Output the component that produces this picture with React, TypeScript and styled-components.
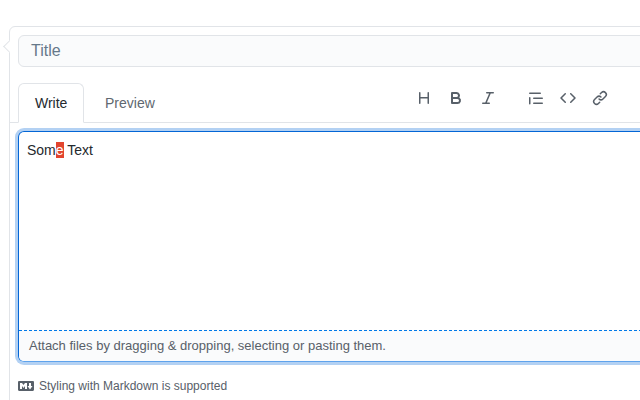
import React from "react";
import styled, { createGlobalStyle } from "styled-components";

const Global = createGlobalStyle`
  html, body { margin: 0; padding: 0; background: #fff; overflow: hidden; }
  body { width: 640px; height: 400px; font-family: "Liberation Sans", Arial, sans-serif; color: #24292e; }
`;

const Page = styled.div`
  width: 640px;
  height: 400px;
  overflow: hidden;
  padding: 26px 0 0 9px;
  box-sizing: border-box;
`;

const Card = styled.div`
  position: relative;
  width: 760px;
  height: 420px;
  box-sizing: border-box;
  border: 1px solid #e1e4e8;
  border-radius: 6px 0 0 0;
  padding-top: 8px;
  &::before {
    content: "";
    position: absolute;
    left: -5px;
    top: 15px;
    width: 8px;
    height: 8px;
    background: #fff;
    border-left: 1px solid #e1e4e8;
    border-bottom: 1px solid #e1e4e8;
    transform: rotate(45deg);
  }
`;

const TitleRow = styled.div`
  padding-left: 8px;
`;

const TitleInput = styled.div`
  height: 32px;
  box-sizing: border-box;
  border: 1px solid #e1e4e8;
  border-radius: 6px;
  background: #fafbfc;
  padding: 0 12px;
  font-size: 16px;
  line-height: 30px;
  color: #66788a;
`;

const TabBar = styled.div`
  display: flex;
  align-items: flex-end;
  height: 40px;
  margin-top: 15px;
  padding-left: 8px;
  border-bottom: 1px solid #e1e4e8;
`;

const WriteTab = styled.div`
  box-sizing: border-box;
  width: 66px;
  height: 40px;
  margin: 0 4px -1px 0;
  padding: 0 16px;
  font-size: 14px;
  line-height: 38px;
  color: #24292e;
  background: #fff;
  border: 1px solid #e1e4e8;
  border-bottom-color: #fff;
  border-radius: 6px 6px 0 0;
`;

const PreviewTab = styled.div`
  box-sizing: border-box;
  height: 39px;
  padding: 0 17px;
  font-size: 14px;
  line-height: 40px;
  color: #606870;
`;

const Toolbar = styled.div`
  display: flex;
  align-items: center;
  height: 30px;
  margin-left: 244px;
  margin-bottom: 9px;
`;

const ToolGroup = styled.div`
  display: flex;
  gap: 16px;
  & + & { margin-left: 32px; }
`;

const ToolIcon = styled.svg`
  width: 16px;
  height: 16px;
  fill: #586069;
  display: block;
`;

const Editor = styled.div`
  margin: 8px 0 0 8px;
  height: 231px;
  box-sizing: border-box;
  border: 1px solid #0366d6;
  border-bottom-color: #5fa3ec;
  border-radius: 6px;
  box-shadow: 0 0 0 3px rgba(3, 102, 214, 0.3);
  display: flex;
  flex-direction: column;
  overflow: hidden;
`;

const EditArea = styled.div`
  flex: 1;
  padding: 10px 8px;
  font-size: 14px;
  line-height: 17px;
  color: #24292e;
`;

const Marked = styled.span`
  background: #e2452f;
  color: #fff;
`;

const AttachBar = styled.div`
  height: 31px;
  box-sizing: border-box;
  border-top: 1px dashed #0078e7;
  background: #fafbfc;
  padding: 0 10px;
  font-size: 13px;
  line-height: 30px;
  color: #586069;
`;

const Hint = styled.div`
  display: flex;
  align-items: center;
  gap: 5px;
  margin: 15px 0 0 8px;
  font-size: 12px;
  line-height: 18px;
  color: #586069;
`;

const paths = {
  heading: "M3.75 2a.75.75 0 0 1 .75.75V7h7V2.75a.75.75 0 0 1 1.5 0v10.5a.75.75 0 0 1-1.5 0V8.5h-7v4.75a.75.75 0 0 1-1.5 0V2.75A.75.75 0 0 1 3.75 2Z",
  bold: "M4 2h4.5a3.501 3.501 0 0 1 2.852 5.53A3.499 3.499 0 0 1 9.5 14H4a1 1 0 0 1-1-1V3a1 1 0 0 1 1-1Zm1 7v3h4.5a1.5 1.5 0 0 0 0-3Zm3.5-2a1.5 1.5 0 0 0 0-3H5v3Z",
  italic: "M6 2.75A.75.75 0 0 1 6.75 2h6.5a.75.75 0 0 1 0 1.5h-2.505l-3.858 9H9.25a.75.75 0 0 1 0 1.5h-6.5a.75.75 0 0 1 0-1.5h2.505l3.858-9H6.75A.75.75 0 0 1 6 2.75Z",
  quote: "M1.75 2.5h10.5a.75.75 0 0 1 0 1.5H1.75a.75.75 0 0 1 0-1.5Zm4 5h8.5a.75.75 0 0 1 0 1.5h-8.5a.75.75 0 0 1 0-1.5Zm0 5h8.5a.75.75 0 0 1 0 1.5h-8.5a.75.75 0 0 1 0-1.5ZM2.5 7.75v6a.75.75 0 0 1-1.5 0v-6a.75.75 0 0 1 1.5 0Z",
  code: "m11.28 3.22 4.25 4.25a.75.75 0 0 1 0 1.06l-4.25 4.25a.749.749 0 0 1-1.275-.326.749.749 0 0 1 .215-.734L13.94 8l-3.72-3.72a.749.749 0 0 1 .326-1.275.749.749 0 0 1 .734.215Zm-6.56 0a.751.751 0 0 1 1.042.018.751.751 0 0 1 .018 1.042L2.06 8l3.72 3.72a.749.749 0 0 1-.326 1.275.749.749 0 0 1-.734-.215L.47 8.53a.75.75 0 0 1 0-1.06Z",
  link: "m7.775 3.275 1.25-1.25a3.5 3.5 0 1 1 4.95 4.95l-2.5 2.5a3.5 3.5 0 0 1-4.95 0 .751.751 0 0 1 .018-1.042.751.751 0 0 1 1.042-.018 1.998 1.998 0 0 0 2.83 0l2.5-2.5a2.002 2.002 0 0 0-2.83-2.83l-1.25 1.25a.751.751 0 0 1-1.042-.018.751.751 0 0 1-.018-1.042Zm-4.69 9.64a1.998 1.998 0 0 0 2.83 0l1.25-1.25a.751.751 0 0 1 1.042.018.751.751 0 0 1 .018 1.042l-1.25 1.25a3.5 3.5 0 1 1-4.95-4.95l2.5-2.5a3.5 3.5 0 0 1 4.95 0 .751.751 0 0 1-.018 1.042.751.751 0 0 1-1.042.018 1.998 1.998 0 0 0-2.83 0l-2.5 2.5a1.998 1.998 0 0 0 0 2.83Z",
  markdown: "M14.85 3c.63 0 1.15.52 1.14 1.15v7.7c0 .63-.51 1.15-1.15 1.15H1.15C.52 13 0 12.48 0 11.84V4.15C0 3.52.52 3 1.15 3ZM9 11V5H7L5.5 7 4 5H2v6h2V8l1.5 1.92L7 8v3Zm2.99.5L14.5 8H13V5h-2v3H9.5Z",
};

const Icon = ({ name }: { name: keyof typeof paths }) => (
  <ToolIcon viewBox="0 0 16 16" aria-hidden="true">
    <path d={paths[name]} />
  </ToolIcon>
);

export default function App() {
  return (
    <Page>
      <Global />
      <Card>
        <TitleRow>
          <TitleInput>Title</TitleInput>
        </TitleRow>
        <TabBar>
          <WriteTab>Write</WriteTab>
          <PreviewTab>Preview</PreviewTab>
          <Toolbar>
            <ToolGroup>
              <Icon name="heading" />
              <Icon name="bold" />
              <Icon name="italic" />
            </ToolGroup>
            <ToolGroup>
              <Icon name="quote" />
              <Icon name="code" />
              <Icon name="link" />
            </ToolGroup>
          </Toolbar>
        </TabBar>
        <Editor>
          <EditArea>
            Som<Marked>e</Marked> Text
          </EditArea>
          <AttachBar>Attach files by dragging &amp; dropping, selecting or pasting them.</AttachBar>
        </Editor>
        <Hint>
          <Icon name="markdown" />
          Styling with Markdown is supported
        </Hint>
      </Card>
    </Page>
  );
}
